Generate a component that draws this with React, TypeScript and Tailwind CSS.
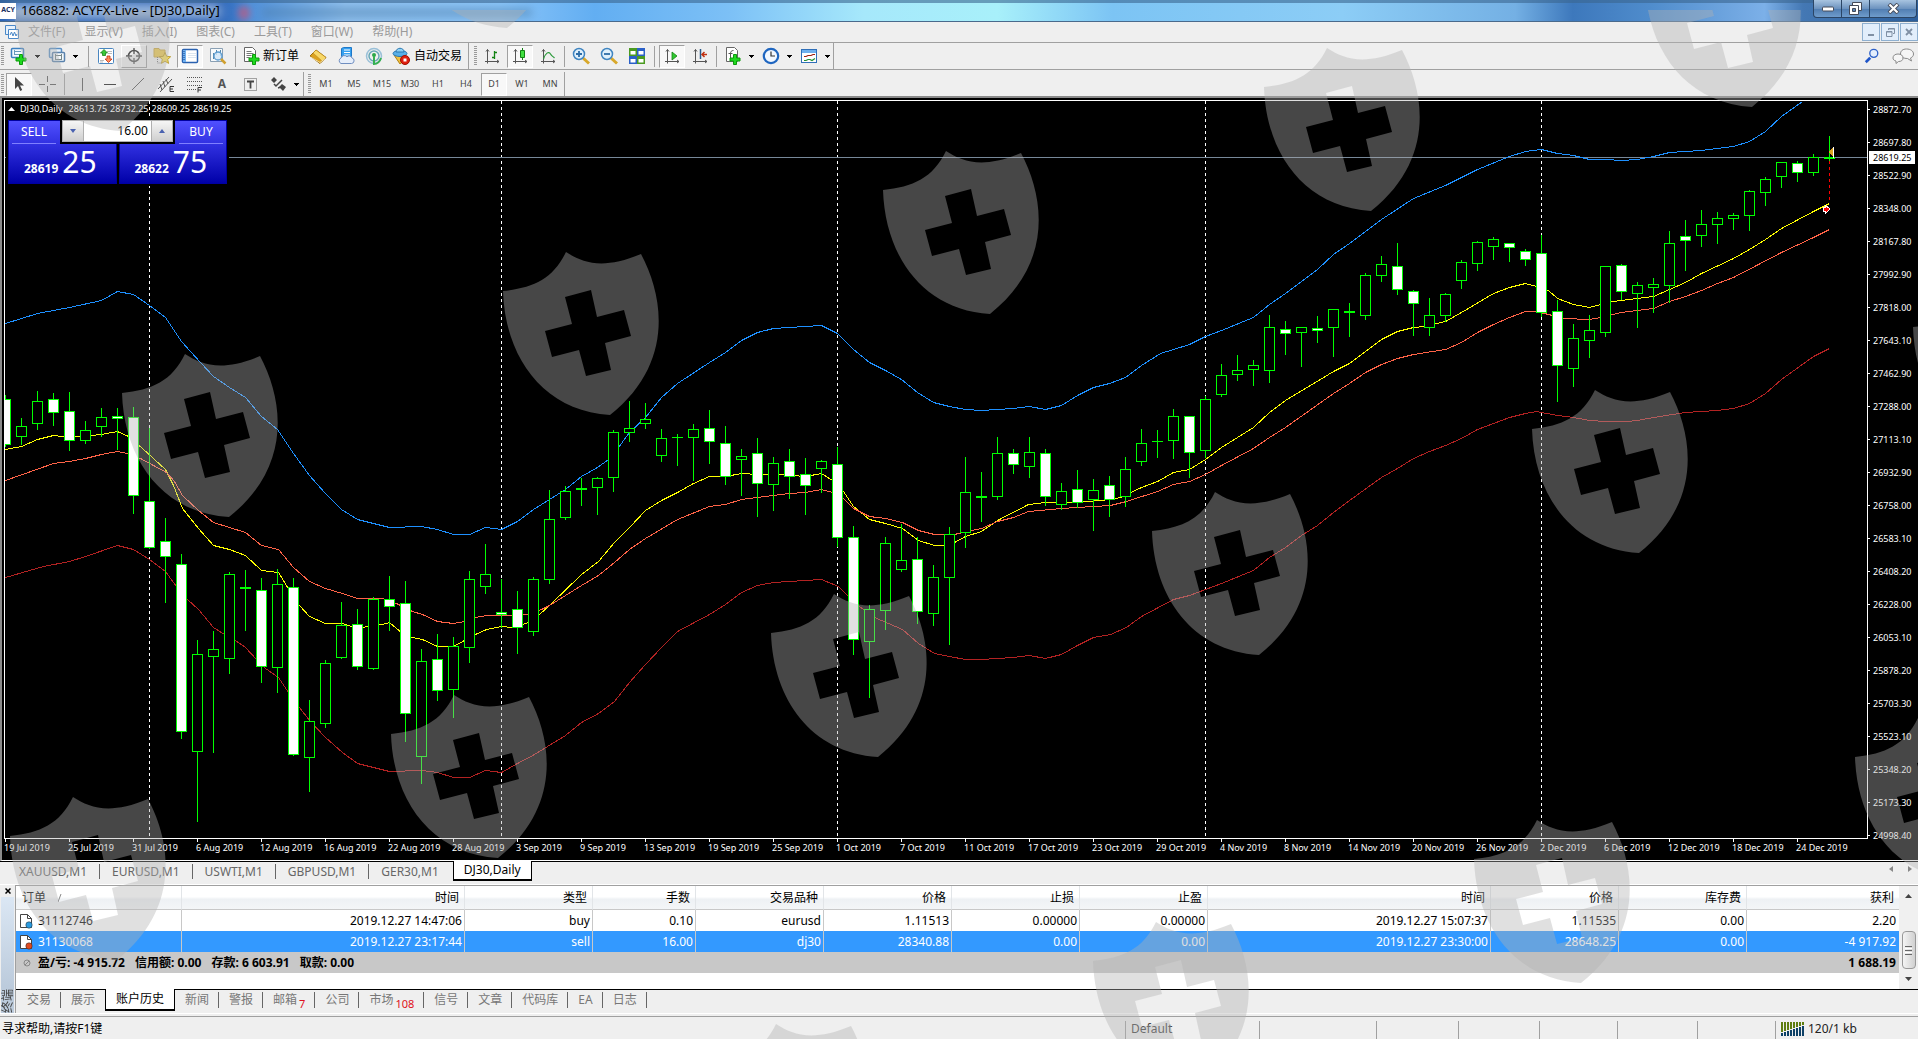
import React from "react";

/* top wick, body top, body bottom, bottom wick, filled */
type Candle = [number, number, number, number, 0 | 1];

const candles: Candle[] = [
  [395, 399, 444, 446, 1], [418, 426, 436, 444, 0], [391, 401, 423, 429, 0], [393, 399, 412, 425, 1],
  [392, 411, 440, 450, 1], [421, 430, 440, 443, 0], [408, 417, 426, 436, 0], [408, 416, 418, 449, 1],
  [407, 417, 495, 513, 1], [428, 501, 547, 548, 1], [518, 541, 556, 602, 1], [554, 564, 731, 738, 1],
  [640, 654, 751, 821, 0], [631, 649, 656, 752, 0], [572, 574, 658, 673, 0], [570, 587, 588, 630, 1],
  [578, 590, 666, 682, 1], [569, 584, 667, 692, 0], [578, 587, 754, 755, 1], [700, 721, 757, 791, 0],
  [660, 663, 723, 727, 0], [602, 625, 657, 658, 0], [609, 624, 666, 669, 1], [597, 599, 668, 669, 0],
  [576, 599, 606, 630, 1], [581, 603, 713, 741, 1], [649, 661, 756, 783, 0], [634, 659, 690, 700, 1],
  [637, 646, 689, 717, 0], [571, 579, 647, 662, 0], [544, 574, 586, 593, 0], [579, 612, 614, 627, 1],
  [591, 609, 627, 653, 1], [577, 579, 631, 635, 0], [490, 519, 579, 583, 0], [486, 491, 517, 519, 0],
  [478, 488, 489, 505, 1], [477, 478, 487, 514, 0], [430, 432, 477, 491, 0], [401, 428, 432, 441, 0],
  [403, 419, 423, 428, 0], [429, 438, 455, 461, 0], [434, 437, 437, 465, 0], [424, 429, 437, 480, 0],
  [410, 428, 441, 463, 1], [426, 443, 476, 484, 1], [449, 456, 459, 495, 0], [438, 453, 483, 516, 1],
  [457, 463, 484, 510, 0], [449, 461, 476, 498, 1], [458, 474, 485, 514, 1], [460, 461, 468, 492, 0],
  [447, 464, 537, 546, 1], [526, 537, 639, 654, 1], [605, 609, 641, 697, 0], [537, 543, 610, 629, 0],
  [524, 560, 569, 571, 0], [537, 559, 611, 623, 1], [565, 577, 613, 625, 0], [527, 534, 577, 644, 0],
  [457, 492, 532, 547, 0], [472, 496, 497, 521, 1], [437, 453, 496, 499, 0], [449, 453, 464, 473, 1],
  [437, 452, 466, 477, 0], [449, 453, 496, 505, 1], [483, 491, 504, 509, 0], [470, 489, 502, 507, 1],
  [479, 490, 499, 530, 0], [476, 485, 499, 516, 1], [457, 469, 496, 506, 0], [429, 443, 461, 465, 0],
  [430, 441, 441, 457, 0], [409, 416, 440, 458, 0], [416, 416, 452, 477, 1], [396, 399, 450, 457, 0],
  [364, 375, 394, 396, 0], [355, 370, 374, 380, 0], [360, 365, 369, 385, 0], [315, 327, 370, 382, 0],
  [321, 329, 333, 354, 1], [327, 327, 332, 366, 0], [316, 328, 330, 342, 1], [309, 309, 327, 356, 0],
  [303, 311, 312, 336, 1], [273, 275, 315, 319, 0], [256, 264, 275, 281, 0], [243, 266, 289, 294, 1],
  [290, 291, 303, 335, 1], [298, 315, 327, 335, 0], [293, 294, 315, 321, 0], [260, 262, 280, 288, 0],
  [241, 242, 263, 270, 0], [237, 239, 246, 259, 0], [243, 243, 247, 261, 1], [249, 251, 259, 265, 1],
  [235, 253, 312, 316, 1], [300, 311, 365, 401, 1], [324, 338, 368, 386, 0], [315, 330, 340, 357, 0],
  [266, 266, 332, 336, 0], [264, 265, 291, 299, 1], [282, 285, 293, 327, 0], [278, 284, 287, 312, 0],
  [231, 243, 285, 302, 0], [220, 236, 240, 270, 1], [210, 224, 235, 246, 0], [212, 218, 224, 243, 0],
  [213, 215, 218, 229, 0], [190, 191, 215, 230, 0], [177, 179, 192, 205, 0], [162, 162, 176, 187, 0],
  [161, 163, 172, 181, 1], [154, 157, 172, 175, 0], [136, 157, 158, 160, 1],
];

const upperBand =
  "5,323 37,313 69,307 101,300 117,291 133,294 149,305 165,317 181,341 200,362 213,376 229,387 245,397 261,416 277,429 293,453 309,475 325,493 341,509 357,519 373,523 389,527 421,526 437,529 453,534 469,534 485,527 501,529 517,521 533,509 549,499 565,489 581,476 597,467 608,459 618,447 629,432 645,417 661,397 677,383 709,362 725,352 741,340 757,332 773,328 805,326 821,325 837,333 853,349 869,362 885,370 901,379 917,392 933,402 949,406 965,409 981,410 1013,408 1029,406 1045,409 1061,405 1077,395 1093,387 1109,383 1125,377 1141,365 1160,353 1173,349 1189,344 1205,336 1221,330 1253,317 1269,304 1285,293 1301,281 1317,269 1333,254 1349,243 1381,219 1413,198 1445,185 1477,169 1509,156 1525,151 1541,149 1557,153 1573,155 1589,159 1605,159 1621,160 1637,159 1653,156 1669,152 1701,150 1733,146 1749,141 1765,131 1781,116 1802,101";
const fastAverage =
  "5,449 21,446 37,439 53,435 69,437 101,434 117,431 128,436 142,448 165,469 173,485 182,508 198,528 213,545 229,549 245,555 261,570 278,572 289,590 299,605 309,616 325,623 342,623 357,628 373,625 382,624 389,622 402,633 412,637 422,639 437,646 453,646 464,640 475,634 486,629 501,626 512,627 528,622 539,614 549,605 581,574 598,561 614,542 629,527 645,510 661,500 677,492 693,483 709,476 725,476 741,473 757,474 779,474 805,476 821,473 832,480 843,491 853,506 869,519 885,523 902,528 918,540 934,545 944,545 954,542 965,536 981,531 997,520 1028,504 1045,502 1077,502 1110,499 1120,497 1141,487 1157,481 1173,472 1189,469 1205,459 1221,447 1253,427 1269,412 1285,400 1333,371 1349,363 1365,351 1381,339 1397,331 1413,327 1424,326 1445,321 1461,312 1493,293 1509,287 1525,283 1536,286 1548,290 1557,298 1573,304 1589,307 1600,304 1612,301 1621,300 1637,298 1653,296 1669,289 1685,282 1701,273 1733,258 1749,249 1765,239 1781,228 1813,211 1829,203";
const slowAverage =
  "5,480 53,463 69,461 85,458 101,454 117,451 127,453 140,458 166,472 174,481 182,495 198,510 213,522 229,527 245,532 261,545 278,549 293,567 309,581 325,588 342,593 357,598 382,598 396,603 412,611 422,614 437,621 453,623 464,621 475,617 486,615 510,615 528,614 541,609 549,605 581,585 598,575 614,562 629,549 645,538 677,519 709,506 725,504 741,499 757,497 789,493 805,492 821,489 832,492 843,498 853,508 861,512 869,516 885,518 902,522 918,530 934,534 954,534 971,530 981,528 997,521 1013,517 1028,511 1061,508 1077,507 1093,506 1110,505 1126,501 1157,491 1173,484 1189,481 1205,474 1221,465 1253,448 1269,437 1285,427 1333,393 1349,383 1365,372 1381,364 1397,358 1413,354 1445,349 1461,342 1477,332 1493,324 1509,317 1525,311 1536,311 1548,314 1564,318 1589,319 1600,317 1612,314 1621,312 1637,310 1653,308 1669,301 1685,296 1701,290 1717,283 1733,277 1781,252 1813,237 1829,229";
const lowerBand =
  "5,577 29,570 43,566 69,561 85,556 117,545 133,549 149,559 165,571 176,586 187,599 198,609 213,627 224,634 235,640 245,647 256,659 265,668 278,677 288,692 299,707 309,720 325,737 342,752 357,763 373,767 389,771 421,770 437,772 453,777 469,777 485,770 501,772 517,763 534,754 565,735 581,722 598,713 614,701 629,682 645,664 661,647 677,631 709,614 725,604 741,592 757,585 773,582 821,579 838,586 848,596 859,606 874,617 902,629 918,643 934,653 949,656 965,659 981,659 1013,657 1029,655 1045,658 1061,654 1077,645 1093,637 1110,634 1126,627 1141,616 1173,599 1189,595 1205,589 1221,583 1253,570 1269,557 1285,547 1301,535 1317,525 1333,512 1349,500 1381,477 1397,468 1413,458 1429,451 1445,445 1461,438 1477,429 1493,423 1509,417 1525,413 1536,411 1557,415 1573,417 1589,420 1605,421 1626,421 1637,420 1653,417 1685,412 1717,410 1733,408 1749,403 1765,393 1781,379 1813,356 1829,348";

const prices = [
  "28872.70", "28697.80", "28522.90", "28348.00", "28167.80", "27992.90", "27818.00", "27643.10",
  "27462.90", "27288.00", "27113.10", "26932.90", "26758.00", "26583.10", "26408.20", "26228.00",
  "26053.10", "25878.20", "25703.30", "25523.10", "25348.20", "25173.30", "24998.40",
];
const dates = [
  "19 Jul 2019", "25 Jul 2019", "31 Jul 2019", "6 Aug 2019", "12 Aug 2019", "16 Aug 2019", "22 Aug 2019",
  "28 Aug 2019", "3 Sep 2019", "9 Sep 2019", "13 Sep 2019", "19 Sep 2019", "25 Sep 2019", "1 Oct 2019",
  "7 Oct 2019", "11 Oct 2019", "17 Oct 2019", "23 Oct 2019", "29 Oct 2019", "4 Nov 2019", "8 Nov 2019",
  "14 Nov 2019", "20 Nov 2019", "26 Nov 2019", "2 Dec 2019", "6 Dec 2019", "12 Dec 2019", "18 Dec 2019",
  "24 Dec 2019",
];

function PriceChart() {
  return (
    <svg className="absolute inset-0 h-full w-full" viewBox="5 101 1862 737" preserveAspectRatio="none" shapeRendering="crispEdges" aria-label="DJ30 Daily">
      {[149, 501, 837, 1205, 1541].map((x) => (
        <line key={x} x1={x + 0.5} x2={x + 0.5} y1={101} y2={838} stroke="#fff" strokeDasharray="3 3" />
      ))}
      <line x1={5} x2={1867} y1={157.5} y2={157.5} stroke="#778899" />
      <g transform="translate(.5 .5)" fill="none">
        <polyline points={upperBand} stroke="#1e90ff" />
        <polyline points={fastAverage} stroke="#ffff00" />
        <polyline points={slowAverage} stroke="#ff6347" />
        <polyline points={lowerBand} stroke="#b22222" />
      </g>
      {candles.map(([hi, top, bottom, lo, filled], i) => {
        const cx = 5 + i * 16;
        return (
          <g key={i}>
            <rect x={cx} y={hi} width={1} height={lo - hi + 1} fill="#00ff00" />
            <rect x={cx - 5} y={top} width={11} height={bottom - top + 1} fill="#00ff00" />
            {bottom - top > 1 && (
              <rect x={cx - 4} y={top + 1} width={9} height={bottom - top - 1} fill={filled ? "#fff" : "#000"} />
            )}
          </g>
        );
      })}
      <line x1={1829.5} x2={1829.5} y1={161} y2={203} stroke="#ff0000" strokeDasharray="3 3" />
      <path d="M1833 147v10l-4-5z" fill="#daa520" />
      <path d="M1833.500 147v11" stroke="#fff" />
      <path d="M1825 205l5 4-5 5v-3h-2v-4h2z" fill="#ff0000" stroke="#fff" />
    </svg>
  );
}

/* ---------- toolbar pieces ---------- */
const Grip = () => (
  <span className="mx-px h-5 w-[3px] shrink-0 bg-[repeating-linear-gradient(to_bottom,#9a9a9a_0_1px,#efefef_1px_2px)]" />
);
const Sep = () => <span className="mx-[3px] h-[21px] w-px shrink-0 bg-[#a0a0a0]" />;
const NarrowSep = () => <span className="mx-[2px] h-[21px] w-px shrink-0 bg-[#a0a0a0]" />;

function Tool({ label, pressed, raised, children }: { label: string; pressed?: boolean; raised?: boolean; children: React.ReactNode }) {
  const look = pressed
    ? "border-t-[#a0a0a0] border-l-[#a0a0a0] border-r-white border-b-white bg-[#f8f8f8]"
    : raised
      ? "border-t-white border-l-white border-r-[#a0a0a0] border-b-[#a0a0a0]"
      : "border-transparent";
  return (
    <button type="button" aria-label={label} className={"mx-px flex h-[23px] w-[26px] shrink-0 items-center justify-center border text-[9px] text-[#444] " + look}>
      {children}
    </button>
  );
}
function Caret({ label }: { label: string }) {
  return (
    <button type="button" aria-label={label} className="flex h-[23px] w-[10px] shrink-0 items-center justify-center">
      <svg width="6" height="3" viewBox="0 0 6 3" shapeRendering="crispEdges"><path d="M0 0h5L2.500 3z" fill="#000" /></svg>
    </button>
  );
}
function Ico({ children, size = 18 }: { children: React.ReactNode; size?: number }) {
  return <svg width={size} height={size} viewBox="0 0 18 18" fill="none" className="shrink-0">{children}</svg>;
}
const Plus = () => <path d="M9.500 7.500h3v3.500h3.500v3h-3.500v3.500h-3v-3.500H6v-3h3.500z" fill="#1fd81f" stroke="#0a9a0a" />;
const Axes = () => <path d="M4.500 2.500v14M2 14.500h14M3 4.500l1.500-2 1.500 2M14 13l2 1.500-2 1.500" stroke="#555" />;

function NewOrderIcon() {
  return (
    <Ico>
      <path d="M1.500.500h8l3 3v11h-11z" fill="#fff" stroke="#666" />
      <path d="M3.500 4.500h5M3.500 6.500h7M3.500 8.500h5M3.500 10.500h3" stroke="#777" />
      <Plus />
    </Ico>
  );
}

function MainToolbar() {
  return (
    <div className="flex h-[27px] shrink-0 items-center border-b border-[#a0a0a0]">
      <Grip />
      <Tool label="新图表">
        <Ico>
          <rect x="1.500" y="1.500" width="12" height="9" rx="1" fill="#f4faff" stroke="#3c7fc0" strokeWidth="1.500" />
          <path d="M4 4.500h7M4.500 3v5M4 7.500h5" stroke="#6699bb" /><Plus />
        </Ico>
      </Tool>
      <Caret label="新图表菜单" />
      <Tool label="图表配置">
        <Ico>
          <rect x="1.500" y="1.500" width="12" height="9" rx="1" fill="#eaf3fb" stroke="#5a8fc4" strokeWidth="1.500" />
          <rect x="4.500" y="5.500" width="12" height="9" rx="1" fill="#f4f9fd" stroke="#5a82ac" strokeWidth="1.500" />
          <path d="M7 8.500h7M7.500 7v6M7 12.500h7M13.500 7v6" stroke="#788" />
        </Ico>
      </Tool>
      <Caret label="图表配置菜单" />
      <span className="w-[4px] shrink-0" />
      <Sep />
      <Tool label="市场报价">
        <Ico>
          <rect x="1.500" y="1.500" width="15" height="15" rx="1" fill="#fff" stroke="#4a86c0" />
          <path d="M3 13.500h4M3 15h3M10 4.500h5M11 6.500h4" stroke="#bbb" />
          <path d="M7 2.500l3.500 3.500H8.500v2.500H5.500V6H3.500z" fill="#38c838" stroke="#178217" strokeWidth=".8" />
          <path d="M11.500 15.500L8 12h2V9h3v3H15z" fill="#ff8a5a" stroke="#c03010" strokeWidth=".8" />
        </Ico>
      </Tool>
      <Tool label="数据窗口" raised>
        <Ico><circle cx="9" cy="9" r="5.500" stroke="#555" strokeWidth="1.500" /><path d="M9 1v6M9 11v6M1 9h6M11 9h6" stroke="#555" strokeWidth="1.300" /></Ico>
      </Tool>
      <Tool label="导航">
        <Ico>
          <path d="M1 1.500h5l1 1.500h5v7H1z" fill="#ecc94e" stroke="#c9a640" />
          <path d="M4.500 10v6h3" stroke="#777" strokeDasharray="1 1" />
          <path d="M12 5.500l1.700 3.800 4 .4-3 2.700.9 4-3.600-2.100-3.600 2.100.9-4-3-2.700 4-.4z" fill="#f7dd5b" stroke="#b08f20" strokeWidth=".8" />
        </Ico>
      </Tool>
      <Tool label="终端" pressed>
        <Ico>
          <rect x="1.500" y="2.500" width="15" height="13" rx="1" fill="#fff" stroke="#2a62b0" strokeWidth="1.500" />
          <rect x="2" y="3" width="3" height="12" fill="#6fb0f0" /><path d="M7 6.500h8M7 8.500h8M7 10.500h8" stroke="#dce6f0" />
          <path d="M2.500 4.500h1M2.500 6.500h1M2.500 8.500h1M2.500 10.500h1M2.500 12.500h1" stroke="#123a80" />
        </Ico>
      </Tool>
      <Tool label="策略测试">
        <Ico>
          <path d="M1.500 1.500h12v13h-12z" fill="#f7fafc" stroke="#8aa0b4" /><path d="M4.500 12V6M7.500 8V3M11.500 3v6" stroke="#5588aa" />
          <circle cx="9" cy="9" r="4" fill="#cfe6f8" fillOpacity=".8" stroke="#5b9bd0" strokeWidth="1.300" />
          <path d="M12 12l4.500 4.500" stroke="#d0a030" strokeWidth="2.500" />
        </Ico>
      </Tool>
      <Sep />
      <button type="button" className="mr-px flex h-[23px] items-center gap-[2px] px-1 text-xs text-black"><NewOrderIcon />新订单</button>
      <Tool label="历史中心">
        <Ico>
          <path d="M1 9L7 3l10 7.500-6 6z" fill="#dba11e" stroke="#9a6c10" /><path d="M7 3l10 7.500-4 3.500L4 6z" fill="#f8d868" stroke="#b8861a" strokeWidth=".6" /><path d="M1.500 10l9.500 5.500 5-4" stroke="#fff3c0" strokeWidth=".8" />
        </Ico>
      </Tool>
      <Tool label="虚拟主机">
        <Ico>
          <path d="M4.500 1.500l2-1h8v9h-10z" fill="#36a0f0" stroke="#1e78c8" /><path d="M7 3h6M7 5.500h6M7 8h6" stroke="#fff" strokeWidth="1.200" />
          <path d="M4 16.500a3 3 0 010-5.500 3.500 3.500 0 016-1.200A3 3 0 0115 11a2.800 2.800 0 01-.5 5.500z" fill="#e6eefa" stroke="#6f8ec0" />
        </Ico>
      </Tool>
      <Tool label="信号">
        <Ico>
          <circle cx="9" cy="9" r="7.500" stroke="#9ac0d8" strokeWidth="1.500" /><circle cx="9" cy="9" r="5" stroke="#68a8b8" strokeWidth="1.500" />
          <circle cx="9" cy="8" r="2" fill="#2fa84a" /><path d="M9 9v8c4 0 6-3 7-6" stroke="#35b050" strokeWidth="2" />
        </Ico>
      </Tool>
      <button type="button" className="flex h-[23px] items-center gap-1 px-1 text-xs text-black">
        <Ico>
          <path d="M2 8l6 9 8-7z" fill="#f0c040" stroke="#b08010" /><ellipse cx="8" cy="6.500" rx="7" ry="3" fill="#5ab0e8" stroke="#2a78b0" /><path d="M4 5c0-5 8-5 8 0z" fill="#8fd0f4" stroke="#2a78b0" />
          <circle cx="13" cy="13" r="4.500" fill="#e02010" stroke="#a01000" /><path d="M11.500 11.500h3v3h-3z" fill="#fff" />
        </Ico>
        自动交易
      </button>
      <span className="ml-[2px] mr-1 h-full w-px bg-[#a0a0a0]" />
      <Grip />
      <Tool label="柱状图"><Ico><Axes /><path d="M11.500 4v8M11.500 5.500H14M9 10.500h2.500" stroke="#128212" strokeWidth="1.300" /></Ico></Tool>
      <Tool label="阴阳烛" pressed><Ico><Axes /><path d="M11.500 1v12" stroke="#128212" /><path d="M9.500 3.500h4v7h-4z" fill="#40e040" stroke="#128212" /></Ico></Tool>
      <Tool label="折线图"><Ico><Axes /><path d="M4.500 12c2-6 5-8 7-5 1 2 2 2 4 4" stroke="#2a9a3a" strokeWidth="1.200" /></Ico></Tool>
      <NarrowSep />
      <Tool label="放大"><Ico><path d="M11 11l6 5.500" stroke="#d8a82a" strokeWidth="3" /><circle cx="7" cy="7" r="5.500" fill="#dff0fc" stroke="#3f84c0" strokeWidth="1.500" /><path d="M4 7h6M7 4v6" stroke="#2d6da8" strokeWidth="1.800" /></Ico></Tool>
      <Tool label="缩小"><Ico><path d="M11 11l6 5.500" stroke="#d8a82a" strokeWidth="3" /><circle cx="7" cy="7" r="5.500" fill="#dff0fc" stroke="#3f84c0" strokeWidth="1.500" /><path d="M4 7h6" stroke="#2d6da8" strokeWidth="1.800" /></Ico></Tool>
      <Tool label="平铺窗口">
        <Ico>
          <path d="M1 1h8v8H1zM9 9h8v8H9z" fill="#4a9a20" /><path d="M9 1h8v8H9zM1 9h8v8H1z" fill="#2a60c8" />
          <path d="M2.500 4h5v3.500h-5zM10.500 4h5v3.500h-5zM2.500 12h5v3.500h-5zM10.500 12h5v3.500h-5z" fill="#fff" />
        </Ico>
      </Tool>
      <Sep />
      <Tool label="自动滚动" pressed><Ico><Axes /><path d="M9 5l5 4-5 4z" fill="#30c830" stroke="#128212" strokeWidth=".8" /></Ico></Tool>
      <Tool label="图表平移"><Ico><Axes /><path d="M9.500 2v10" stroke="#2a5a8a" strokeWidth="1.500" /><path d="M16 7.500h-5M13.500 5L11 7.500l2.500 2.500" stroke="#c03010" strokeWidth="1.500" /></Ico></Tool>
      <NarrowSep />
      <Tool label="技术指标">
        <Ico><path d="M2.500.500h8l3 3v11h-11z" fill="#fff" stroke="#666" /><path d="M9.500 3.500c-2 0-3 1-3 3v5M4.500 6.500h4" stroke="#555" /><Plus /></Ico>
      </Tool>
      <Caret label="技术指标菜单" />
      <Tool label="时间周期"><Ico><circle cx="9" cy="9" r="7.200" fill="#f2f8ff" stroke="#1f66c0" strokeWidth="2.200" /><path d="M9 4.500V9h4" stroke="#333" strokeWidth="1.200" /></Ico></Tool>
      <Caret label="时间周期菜单" />
      <Tool label="模板">
        <Ico><rect x="1.500" y="2.500" width="15" height="13" fill="#fff" stroke="#2f6fb8" /><path d="M2 3h14v3H2z" fill="#6fb0ee" /><path d="M4 9.500h2l2-1h3l2-1h2" stroke="#a02010" strokeWidth="1.200" /><path d="M4 13.500h2l2-1h2l2 1 3-2" stroke="#209030" strokeWidth="1.200" /></Ico>
      </Tool>
      <Caret label="模板菜单" />
      <span className="h-full w-px bg-[#a0a0a0]" />
      <span className="flex-1" />
      <button type="button" aria-label="搜索" className="mr-3 flex w-4">
        <Ico size={16}><path d="M7 11l-5 5" stroke="#1f55c8" strokeWidth="3" /><circle cx="11" cy="6" r="4.500" fill="#e4eefc" stroke="#2f62c8" strokeWidth="1.500" /></Ico>
      </button>
      <button type="button" aria-label="聊天" className="mr-1 flex">
        <svg width="22" height="16" viewBox="0 0 22 16" fill="#f6f6f6" stroke="#8a8a8a">
          <path d="M14.500 1c4 0 7 2 7 5 0 2-1 3-3 4l1 3-4-2.500c-4 0-7-1.500-7-4.500s2-5 6-5z" />
          <path d="M6 6c3 0 5 1.500 5 4s-2 3.500-4.500 3.500L4 15.500V13C2 12.500 1 11.500 1 10c0-2.500 2-4 5-4z" />
        </svg>
      </button>
    </div>
  );
}

function DrawingToolbar() {
  return (
    <div className="flex h-[26px] shrink-0 items-center pt-[2px]">
      <Grip />
      <Tool label="光标" pressed><Ico><path d="M5 2v12l3-3 2.200 5 2-1L10 10.500h4z" fill="#444" /></Ico></Tool>
      <Tool label="十字准线"><Ico><path d="M9.500 1v6M9.500 11v6M1 9.500h6M12 9.500h6" stroke="#555" /></Ico></Tool>
      <Sep />
      <Tool label="垂直线"><Ico><path d="M9.500 3v13" stroke="#555" /></Ico></Tool>
      <Tool label="水平线"><Ico><path d="M3 9.500h12" stroke="#555" /></Ico></Tool>
      <Tool label="趋势线"><Ico><path d="M3 15L15 3" stroke="#555" /></Ico></Tool>
      <Tool label="等距通道">
        <Ico><path d="M1 14L12 2M3 17L15 4M3 9l2 6M6 6l2 6M9 4l2 5" stroke="#555" /><path d="M17 11.500h-4v5h4M13 14h3" stroke="#333" /></Ico>
      </Tool>
      <Tool label="斐波纳契回调线">
        <Ico><path d="M2 2.500h15M2 6.500h15M2 10.500h15M2 14.500h9" stroke="#555" strokeDasharray="1 1" /><path d="M17 12.500h-4v5M13 15h3" stroke="#333" /></Ico>
      </Tool>
      <Tool label="文字"><span className="text-xs font-bold text-[#555]">A</span></Tool>
      <Tool label="文字标签">
        <Ico><rect x="3.500" y="3.500" width="12" height="12" stroke="#555" strokeDasharray="1 1" /><path d="M6 6.500h7M9.500 6.500v7" stroke="#444" strokeWidth="1.800" /></Ico>
      </Tool>
      <Tool label="箭头">
        <Ico><path d="M2 5l3-3 3 3-3 3zM10 12l3-3 4 3-3 4z" fill="#444" /><path d="M5 9l2 2 6-6M9 13l3-1" stroke="#444" strokeWidth="1.500" /></Ico>
      </Tool>
      <Caret label="箭头菜单" />
      <span className="ml-px mr-[3px] h-full w-px bg-[#a0a0a0]" />
      <Grip />
      {["M1", "M5", "M15", "M30", "H1", "H4", "D1", "W1", "MN"].map((t) => (
        <Tool key={t} label={t} pressed={t === "D1"}>{t}</Tool>
      ))}
      <span className="h-full w-px bg-[#a0a0a0]" />
    </div>
  );
}

function TitleBar() {
  return (
    <header className="relative flex h-[22px] shrink-0 items-center overflow-hidden border-b border-[#4a6a8c] bg-[linear-gradient(to_right,#2a62b4_0%,#1f55ad_11%,#4f8fd8_13%,#8fc0ee_18%,#8ac4f8_26%,#62aef2_31%,#7cc0f6_38%,#a6e8fb_45%,#a8f0fa_52%,#7cc4f4_58%,#8ccdf6_70%,#74b0e4_79%,#3d78bc_82%,#4f8ccc_86%,#7cb0e8_92%,#4478b4_94%,#2c5f9c_100%)]">
      <div className="absolute left-[238px] top-[6px] h-[14px] w-[12px] rounded-full bg-[#c05a80] opacity-70 blur-[3px]" />
      <div className="absolute left-[262px] top-[8px] h-[9px] w-[270px] bg-[#4a7ca8] opacity-50 blur-[4px]" />
      <div className="absolute left-[10px] top-[4px] h-[14px] w-[210px] bg-[#c8dcf0] opacity-80 blur-[6px]" />
      <div className="absolute inset-x-0 top-0 h-[3px] bg-[#3a6690] opacity-60" />
      <span className="z-10 flex h-[16px] w-[16px] items-center justify-center bg-white text-[7px] font-bold text-[#203060]">ACY</span>
      <h1 className="z-10 ml-[5px] flex-1 text-[13px] text-black">166882: ACYFX-Live - [DJ30,Daily]</h1>
      <div className="z-10 mr-px flex h-[18px] self-start overflow-hidden rounded-b border border-t-0 border-[#2b4565] bg-[linear-gradient(to_bottom,#a8c4e0_0,#6d93bf_50%,#4f7cb0_51%,#6f9ccc)]">
        <button type="button" aria-label="最小化" className="flex w-7 items-center justify-center border-r border-[#2b4565]">
          <svg width="12" height="6" viewBox="0 0 12 6"><rect x=".5" y="1" width="11" height="4" rx="1" fill="#fff" stroke="#444a58" /></svg>
        </button>
        <button type="button" aria-label="还原" className="flex w-7 items-center justify-center border-r border-[#2b4565]">
          <svg width="13" height="13" viewBox="0 0 13 13" fill="#fff" stroke="#444a58"><path d="M3.500.5h9v8h-9z" /><path d="M.5 3.500h9v9h-9z" /><path d="M3.500 6.500h3v3h-3z" fill="#5a86b8" /></svg>
        </button>
        <button type="button" aria-label="关闭" className="flex w-[46px] items-center justify-center">
          <svg width="13" height="11" viewBox="0 0 13 11"><path d="M2 1l9 9M11 1l-9 9" stroke="#444a58" strokeWidth="4" /><path d="M2.500 1.500l8 8M10.500 1.500l-8 8" stroke="#fff" strokeWidth="2.200" /></svg>
        </button>
      </div>
    </header>
  );
}

const mdiButton = "flex h-[18px] w-[18px] items-center justify-center border border-[#8fb0d0] bg-[#e2eefb]";

function MenuBar() {
  return (
    <nav className="flex h-[21px] shrink-0 items-center gap-px border-b border-[#a0a0a0]">
      <svg className="ml-[5px] mr-1" width="14" height="14" viewBox="0 0 14 14" fill="none" stroke="#4a88c8">
        <path d="M.5.500h10v9H.5z" fill="#e8f2fc" /><path d="M3.500 4.500h10v9h-10z" fill="#fff" /><path d="M5 10l1.500-3 1.500 4 1.500-4 1.500 4 1-2" />
      </svg>
      {["文件(F)", "显示(V)", "插入(I)", "图表(C)", "工具(T)", "窗口(W)", "帮助(H)"].map((m) => (
        <button key={m} type="button" className="px-[9px] text-xs text-[#9a9a9a] first-of-type:pl-1">{m}</button>
      ))}
      <div className="ml-auto flex gap-px">
        <button type="button" aria-label="最小化图表" className={mdiButton}><svg width="10" height="10" viewBox="0 0 10 10"><path d="M2 8h6" stroke="#8090a4" strokeWidth="2" /></svg></button>
        <button type="button" aria-label="还原图表" className={mdiButton}><svg width="10" height="10" viewBox="0 0 10 10" fill="none" stroke="#8090a4"><path d="M3.500 3V1.500h6v5H8M3.500 2h6M1.500 4.500H7v5H1.500zM1.500 5H7" /></svg></button>
        <button type="button" aria-label="关闭图表" className={mdiButton}><svg width="10" height="10" viewBox="0 0 10 10"><path d="M2 2l6 6M8 2L2 8" stroke="#8090a4" strokeWidth="1.800" /></svg></button>
      </div>
    </nav>
  );
}

function DealButton({ side, whole, pips }: { side: string; whole: string; pips: string }) {
  const right = side === "BUY";
  return (
    <button type="button" className="flex h-[64px] flex-1 flex-col border border-[#0000a0] bg-[linear-gradient(to_bottom,#5050ff,#3030e0_38%,#0000a8)] text-white">
      <span className={"flex h-[23px] w-[50px] items-center justify-center text-xs " + (right ? "self-end" : "")}>
        <span className="flex h-full w-[44px] items-center justify-center border-b border-[#8080ff]">{side}</span>
      </span>
      <span className="flex w-full items-baseline justify-center gap-1 pr-1 leading-9">
        <span className="text-xs font-bold">{whole}</span>
        <span className="text-[30px]">{pips}</span>
      </span>
    </button>
  );
}

function OneClickPanel() {
  return (
    <div className="absolute left-px top-[17px] w-[223px] bg-black p-[2px]">
      <div className="relative flex gap-[2px]">
        <DealButton side="SELL" whole="28619" pips="25" />
        <DealButton side="BUY" whole="28622" pips="75" />
        <div className="absolute left-[52px] top-0 flex h-[24px] w-[115px] bg-black px-[2px] pb-[2px]">
          <div className="flex w-full border border-[#b0b0b0] bg-white">
            <button type="button" aria-label="减少" className="flex w-[21px] items-center justify-center border-r border-[#b0b0b0] bg-[linear-gradient(to_bottom,#f6f6f6,#cfcfcf)]">
              <svg width="6" height="4" viewBox="0 0 6 4"><path d="M0 0h6L3 4z" fill="#4a62b0" /></svg>
            </button>
            <input aria-label="手数" defaultValue="16.00" className="w-0 min-w-0 flex-1 bg-white pr-[3px] text-right text-xs text-black outline-none" />
            <button type="button" aria-label="增加" className="flex w-[21px] items-center justify-center border-l border-[#b0b0b0] bg-[linear-gradient(to_bottom,#f6f6f6,#cfcfcf)]">
              <svg width="6" height="4" viewBox="0 0 6 4"><path d="M0 4h6L3 0z" fill="#4a62b0" /></svg>
            </button>
          </div>
        </div>
      </div>
    </div>
  );
}

function ChartWindow() {
  return (
    <main className="flex min-h-0 flex-1 flex-col border-b border-l-2 border-t-2 border-b-white border-l-[#8a8a8a] border-t-[#8a8a8a] bg-black pl-[2px] pt-[2px]">
      <div className="flex min-h-0 flex-1">
        <div className="relative flex-1 border border-white">
          <PriceChart />
          <p className="absolute left-[3px] top-0 flex h-[15px] items-center text-[9px] text-white">
            <svg className="mr-[5px]" width="7" height="5" viewBox="0 0 7 5"><path d="M0 5h7L3.500 1z" fill="#fff" /></svg>
            <span className="mr-[6px]">DJ30,Daily</span>
            <span className="flex gap-[3px]"><span>28613.75</span><span>28732.25</span><span>28609.25</span><span>28619.25</span></span>
          </p>
          <OneClickPanel />
        </div>
        <div className="relative w-[50px] shrink-0">
          <ul className="flex h-[calc(100%+3px)] flex-col justify-between pt-[3px] text-[9px] leading-[13px] text-white">
            {prices.map((p) => (
              <li key={p} className="flex items-center gap-[3px]"><span className="h-px w-[2px] bg-white" />{p}</li>
            ))}
          </ul>
          <span className="absolute left-px top-[51px] h-[13px] w-[46px] bg-white pl-[4px] text-[9px] leading-[13px] text-black">28619.25</span>
        </div>
      </div>
      <ul className="flex h-[21px] shrink-0 pl-px text-[9px] text-white">
        {dates.map((d, i) => (
          <li key={d} className={i === dates.length - 1 ? "min-w-0 flex-1 whitespace-nowrap" : "w-[64px] shrink-0 whitespace-nowrap"}>
            <span className="block h-[3px] w-px bg-white" />
            <span className="-ml-px block leading-[11px]">{d}</span>
          </li>
        ))}
      </ul>
    </main>
  );
}

function ChartTabs() {
  return (
    <div className="flex h-[24px] shrink-0 items-start border-b border-t border-b-white border-t-black pl-[7px]">
      {["XAUUSD,M1", "EURUSD,M1", "USWTI,M1", "GBPUSD,M1", "GER30,M1"].map((t, i) => (
        <button key={t} type="button" className="flex h-[19px] items-center px-[12px] text-xs text-[#666]">
          {t}{i < 4 && <span className="-mr-[12px] ml-[12px] h-[15px] w-px bg-[#666]" />}
        </button>
      ))}
      <button type="button" className="-mt-px ml-[2px] h-[20px] border border-b-2 border-t-0 border-black bg-white px-[10px] text-xs text-black">DJ30,Daily</button>
      <div className="ml-auto mr-[6px] flex h-full items-center gap-[15px]">
        <button type="button" aria-label="向左" className="-mt-2"><svg width="4" height="6" viewBox="0 0 4 6"><path d="M4 0v6L0 3z" fill="#888" /></svg></button>
        <button type="button" aria-label="向右" className="-mt-2"><svg width="4" height="6" viewBox="0 0 4 6"><path d="M0 0v6l4-3z" fill="#888" /></svg></button>
      </div>
    </div>
  );
}

function OrderIcon({ color }: { color: string }) {
  return (
    <svg width="14" height="16" viewBox="0 0 14 16" className="shrink-0">
      <path d="M1.500 1.500h7l4 4v9h-11z" fill="#fff" stroke="#444" /><path d="M8.500 1.500v4h4" fill="none" stroke="#444" />
      <circle cx="10" cy="12" r="3.200" fill={color} stroke="#222" strokeWidth=".5" />
    </svg>
  );
}

const headers = ["订单", "时间", "类型", "手数", "交易品种", "价格", "止损", "止盈", "时间", "价格", "库存费", "获利"];
const orders = [
  { id: "31112746", color: "#2a9be0", cells: ["2019.12.27 14:47:06", "buy", "0.10", "eurusd", "1.11513", "0.00000", "0.00000", "2019.12.27 15:07:37", "1.11535", "0.00", "2.20"] },
  { id: "31130068", color: "#e04a20", cells: ["2019.12.27 23:17:44", "sell", "16.00", "dj30", "28340.88", "0.00", "0.00", "2019.12.27 23:30:00", "28648.25", "0.00", "-4 917.92"] },
];

function HistoryTable() {
  return (
    <table className="w-full table-fixed border-separate border-spacing-0 text-xs">
      <colgroup>
        <col className="w-[166px]" /><col className="w-[283px]" /><col className="w-[128px]" /><col className="w-[103px]" />
        <col className="w-[128px]" /><col className="w-[128px]" /><col className="w-[128px]" /><col className="w-[128px]" />
        <col className="w-[283px]" /><col className="w-[128px]" /><col className="w-[128px]" /><col />
      </colgroup>
      <thead>
        <tr className="h-[24px] bg-[linear-gradient(to_bottom,#fff_45%,#eef1f4_55%,#f4f6f8)]">
          {headers.map((h, i) => (
            <th key={i} scope="col" className={"border-b border-r border-b-[#c8c8c8] border-r-[#e2e5e8] py-0 font-normal last:border-r-0 " + (i === 0 ? "pl-[6px] text-left" : "pr-[5px] text-right")}>
              {h}
              {i === 0 && <svg className="ml-3 inline" width="4" height="8" viewBox="0 0 4 8"><path d="M0 8l3-8" stroke="#888" fill="none" /></svg>}
            </th>
          ))}
        </tr>
      </thead>
      <tbody>
        {orders.map((o, r) => (
          <tr key={o.id} className={r === 1 ? "h-[21px] bg-[#3399ff] text-white" : "h-[21px] bg-white text-black"}>
            <td className="border-r border-[#c8c8c8] py-0 pl-[3px]"><span className="flex items-center gap-[5px]"><OrderIcon color={o.color} />{o.id}</span></td>
            {o.cells.map((c, i) => (
              <td key={i} className="border-r border-[#c8c8c8] py-0 pr-[2px] text-right last:border-r-0 last:pr-[3px]">{c}</td>
            ))}
          </tr>
        ))}
        <tr className="h-[21px] bg-[#c8c8c8] font-bold text-black">
          <td colSpan={11} className="py-0 pl-[7px]">
            <span className="flex items-center gap-[7px]">
              <svg width="8" height="8" viewBox="0 0 8 8" fill="none" stroke="#888"><circle cx="4" cy="4" r="3" /><path d="M2 6l4-4" /></svg>
              <span className="flex gap-[10px]">
                <span>盈/亏: -4 915.72</span><span>信用额: 0.00</span><span>存款: 6 603.91</span><span>取款: 0.00</span>
              </span>
            </span>
          </td>
          <td className="py-0 pr-[3px] text-right">1 688.19</td>
        </tr>
      </tbody>
    </table>
  );
}

const bottomTabs: { name: string; badge?: string }[] = [
  { name: "交易" }, { name: "展示" }, { name: "账户历史" }, { name: "新闻" }, { name: "警报" }, { name: "邮箱", badge: "7" },
  { name: "公司" }, { name: "市场", badge: "108" }, { name: "信号" }, { name: "文章" }, { name: "代码库" }, { name: "EA" }, { name: "日志" },
];

function Terminal() {
  return (
    <section className="mb-[2px] flex shrink-0 border-b border-white">
      <div className="flex w-[15px] shrink-0 flex-col items-center">
        <button type="button" aria-label="关闭终端" className="flex h-[12px] items-center">
          <svg width="6" height="6" viewBox="0 0 6 6"><path d="M.5.500l5 5M5.500.500l-5 5" stroke="#000" strokeWidth="1.500" /></svg>
        </button>
        <div className="w-[13px] flex-1 bg-[linear-gradient(to_bottom,#dbe7f4,#bccbdc)]" />
        <span className="h-[27px] w-[13px] rotate-180 bg-[#bccbdc] text-[12px] leading-[13px] text-[#444] [text-orientation:sideways] [writing-mode:vertical-rl]">终端</span>
      </div>
      <div className="min-w-0 flex-1 border-l border-t border-[#a0a0a0]">
        <div className="flex h-[103px] bg-white">
          <div className="min-w-0 flex-1"><HistoryTable /></div>
          <div className="flex w-[19px] shrink-0 flex-col items-center bg-[#f0f0f0] py-[8px]">
            <svg width="7" height="4" viewBox="0 0 7 4"><path d="M0 4h7L3.500 0z" fill="#444" /></svg>
            <span className="mt-[33px] flex h-[38px] w-[14px] flex-col items-center justify-center gap-px rounded-sm border border-[#989898] bg-[linear-gradient(to_right,#f4f4f4,#d0d0d0)]">
              <span className="h-px w-[7px] bg-[#666]" /><span className="h-px w-[7px] bg-white" /><span className="h-px w-[7px] bg-[#666]" /><span className="h-px w-[7px] bg-white" /><span className="h-px w-[7px] bg-[#666]" />
            </span>
            <svg className="mt-auto shrink-0" width="7" height="4" viewBox="0 0 7 4"><path d="M0 0h7L3.500 4z" fill="#444" /></svg>
          </div>
        </div>
        <div className="flex h-[24px] items-start border-t border-black pl-px">
          {bottomTabs.map((t, i) =>
            t.name === "账户历史" ? (
              <button key={t.name} type="button" className="-mt-px h-[22px] border border-b-2 border-t-0 border-black bg-white px-[10px] text-xs text-black">{t.name}</button>
            ) : (
              <button key={t.name} type="button" className="flex h-[20px] items-center pl-[10px] text-xs text-[#777]">
                {t.name}
                {t.badge && <span className="ml-[2px] mt-2 text-[11px] leading-[12px] text-[#e01020]">{t.badge}</span>}
                <span className={i === 1 ? "ml-[9px] h-4 w-px" : "ml-[9px] h-4 w-px bg-[#666]"} />
              </button>
            ),
          )}
        </div>
      </div>
    </section>
  );
}

function StatusBar() {
  return (
    <footer className="flex h-[23px] shrink-0 border-t border-[#a0a0a0] pt-1 text-xs leading-[16px]">
      <span className="flex-1 pl-[2px] text-black">寻求帮助,请按F1键</span>
      <span className="w-[134px] border-l border-[#a0a0a0] pl-[5px] text-[#444]">Default</span>
      <span className="w-[117px] border-l border-[#a0a0a0]" />
      <span className="w-[82px] border-l border-[#a0a0a0]" />
      <span className="w-[81px] border-l border-[#a0a0a0]" />
      <span className="w-[78px] border-l border-[#a0a0a0]" />
      <span className="w-[80px] border-l border-[#a0a0a0]" />
      <span className="w-[78px] border-l border-[#a0a0a0]" />
      <span className="flex w-[143px] items-center gap-[4px] border-l border-[#a0a0a0] pb-[2px] pl-[5px] text-[#222]">
        <svg width="23" height="14" viewBox="0 0 23 14" shapeRendering="crispEdges">
          {[0, 1, 2, 3, 4, 5, 6, 7].map((i) => (
            <g key={i}>
              <rect x={i * 3} y="0" width="2" height={10 - i} fill="#5e7d10" />
              <rect x={i * 3} y={11 - i} width="2" height={3 + i} fill="#0d4066" />
            </g>
          ))}
        </svg>
        120/1 kb
      </span>
    </footer>
  );
}

const shields = [
  [14, 7], [400, -96], [1645, -17], [122, 393], [503, 291], [883, 190], [1264, 87], [10, 836], [391, 734],
  [771, 633], [1152, 531], [1532, 429], [1913, 327], [713, 1063], [1093, 961], [1474, 859], [1855, 757],
];

function Watermark() {
  return (
    <div className="pointer-events-none absolute inset-x-0 bottom-0 top-[10px] overflow-hidden" aria-hidden="true">
      <svg className="block h-full w-full" viewBox="0 10 1918 1029" preserveAspectRatio="xMidYMid slice">
        {shields.map(([x, y]) => (
          <path
            key={x + "-" + y}
            transform={"translate(" + x + " " + y + ")"}
            fill="#b2b2b2"
            fillOpacity=".4"
            fillRule="evenodd"
            d="M0 0C30-3 50-12 63-39 80-28 100-21 138-37 162 8 170 74 107 124 40 120 2 66 0 0zM62 6L69 33 42 40 49 66 76 59 83 85 108 79 102 52 128 45 121 19 94 26 88-1z"
          />
        ))}
      </svg>
    </div>
  );
}

export default function App() {
  return (
    <div className="relative flex h-screen flex-col overflow-hidden bg-[#efefef] font-['Noto_Sans','Noto_Sans_CJK_SC',sans-serif]">
      <TitleBar />
      <MenuBar />
      <MainToolbar />
      <DrawingToolbar />
      <ChartWindow />
      <ChartTabs />
      <Terminal />
      <StatusBar />
      <Watermark />
    </div>
  );
}
